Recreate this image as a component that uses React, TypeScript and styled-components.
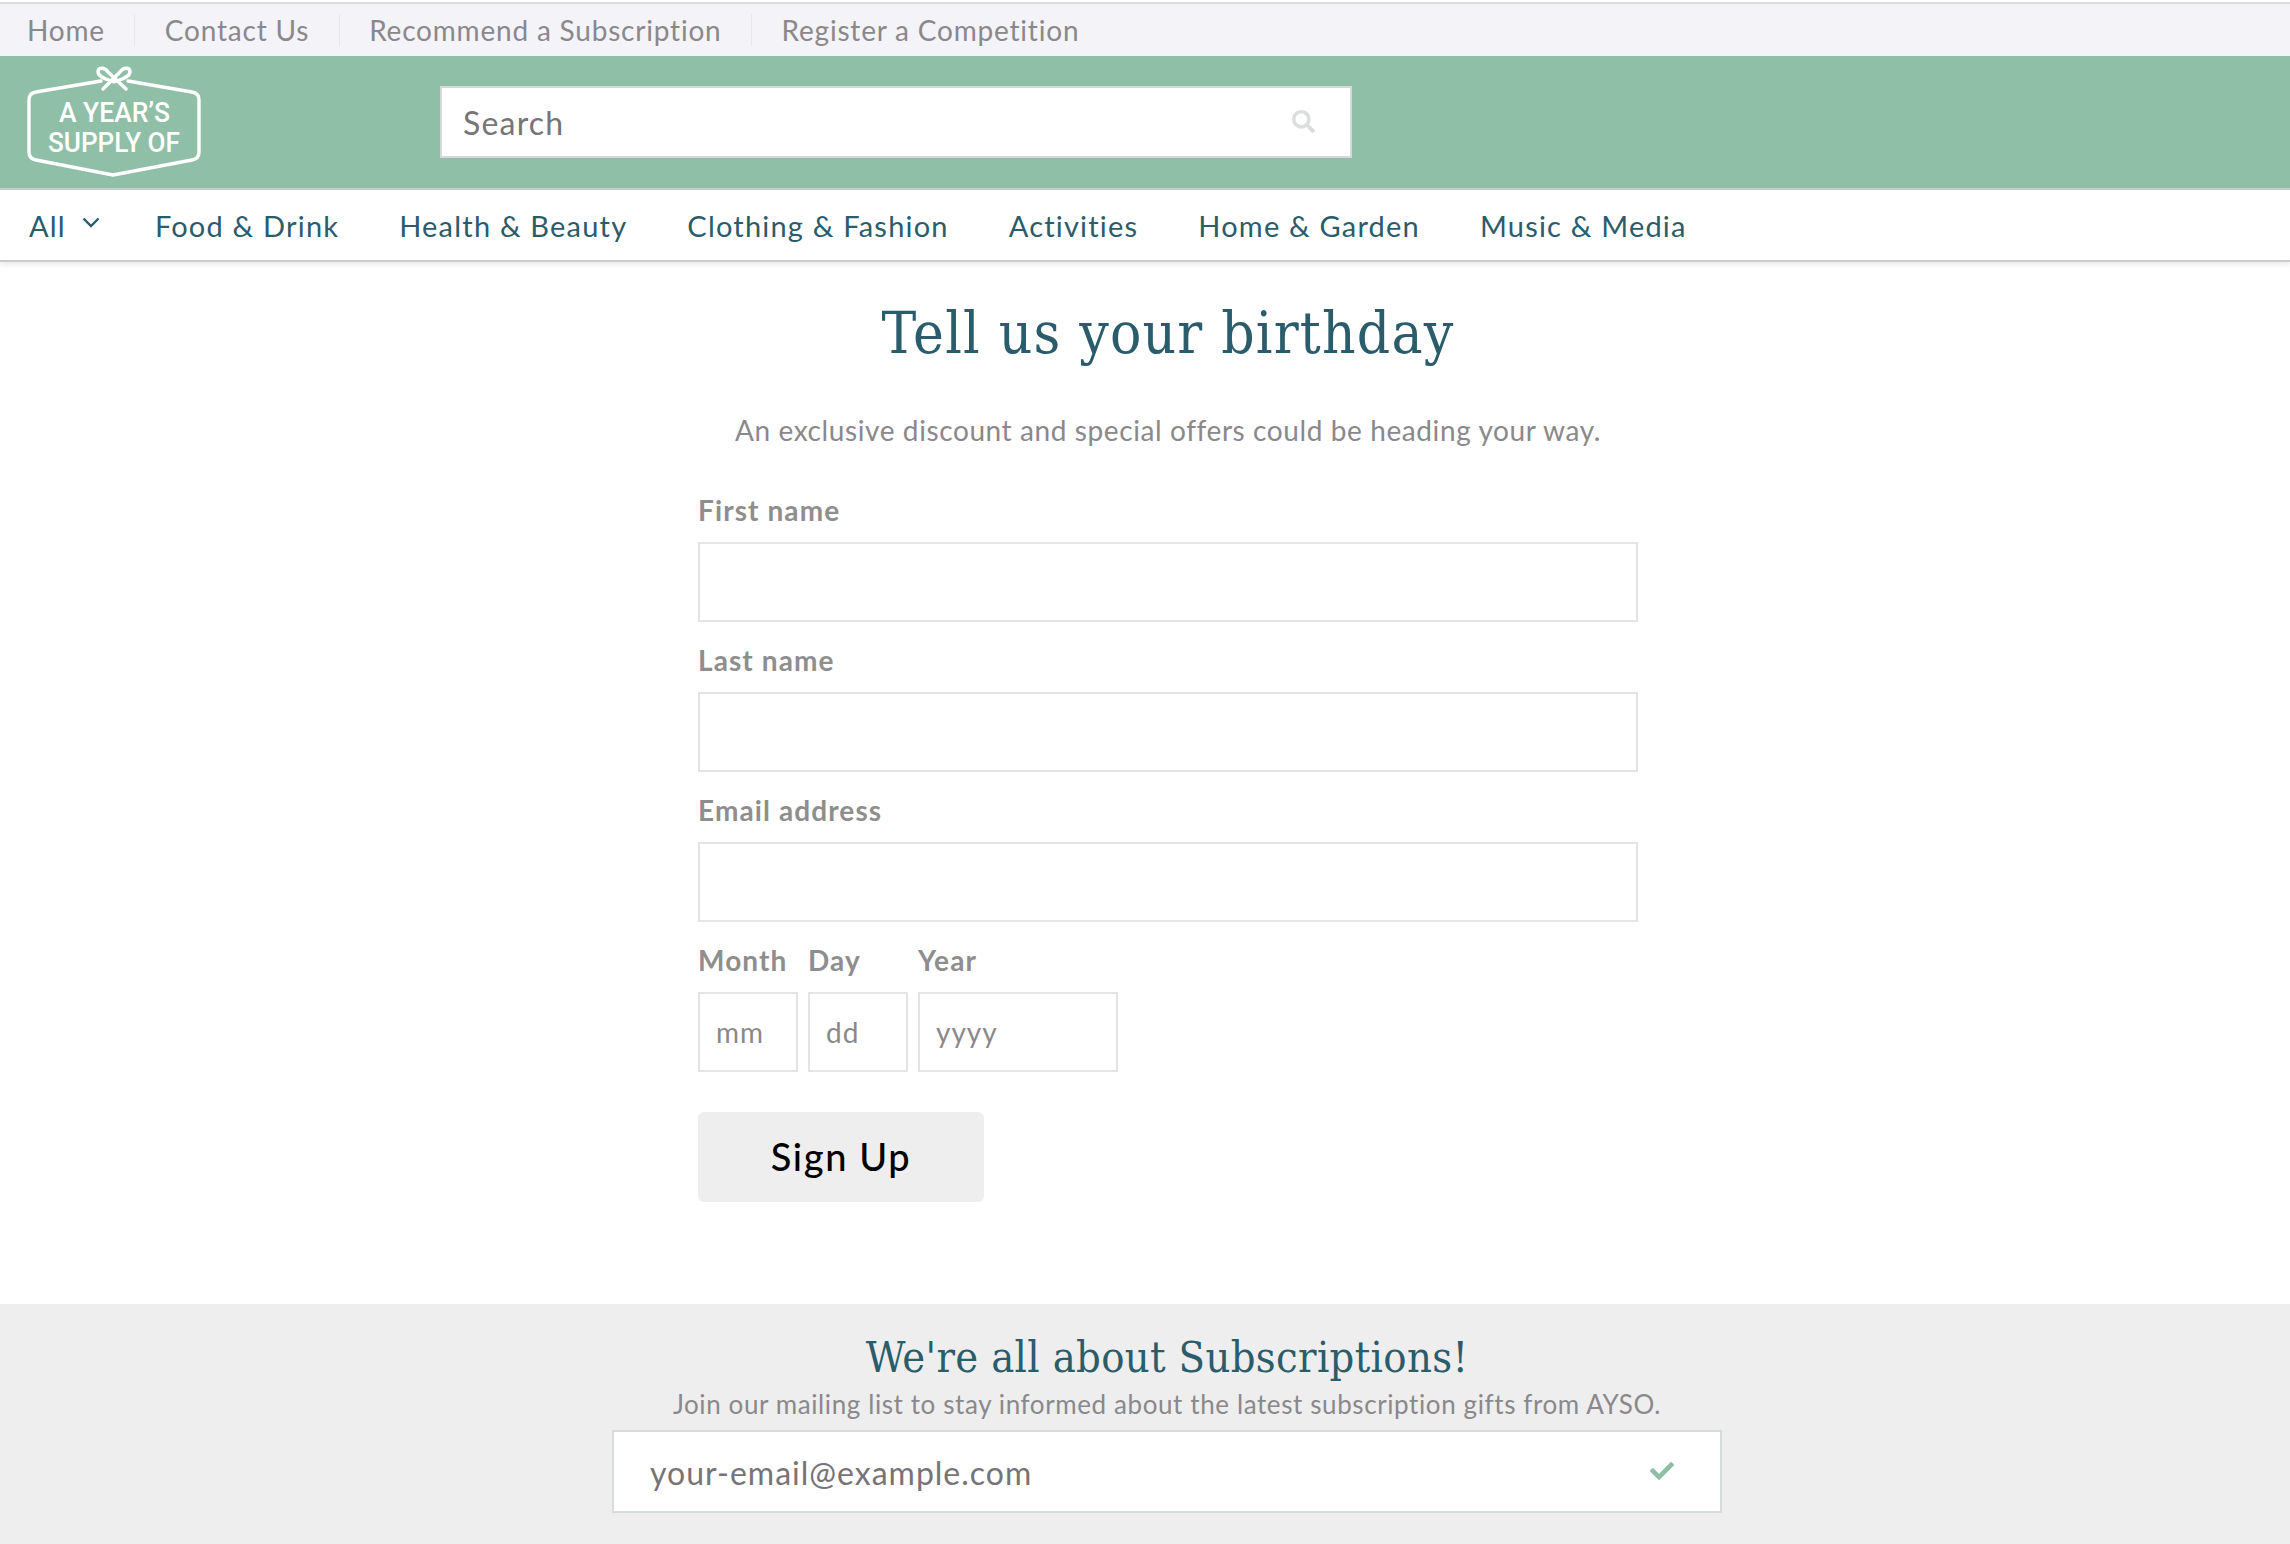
import React from 'react';
import styled, { createGlobalStyle } from 'styled-components';
import { FaSearch, FaCheck } from 'react-icons/fa';

const Global = createGlobalStyle`
  html, body { margin: 0; padding: 0; background: #fff; }
  * { box-sizing: border-box; }
  body { font-family: Lato, "Open Sans", sans-serif; }
`;
const Page = styled.div`
  width: 2290px;
  height: 1544px;
  overflow: hidden;
  display: flex;
  flex-direction: column;
  padding-top: 2px;
`;
const TopBar = styled.nav`
  height: 54px;
  flex: none;
  display: flex;
  align-items: center;
  padding: 0 0 0 27px;
  background: #f4f3f7;
  border-top: 2px solid #dcdcdf;
`;
const TopLink = styled.a`
  display: flex;
  align-items: center;
  height: 32px;
  padding: 0 29.5px;
  font-size: 28px;
  letter-spacing: 0.8px;
  color: #8a888b;
  border-right: 1px solid #e8e7ea;
  &:first-child { padding-left: 0; }
  &:last-child { border-right: 0; }
`;
const Brand = styled.header`
  height: 134px;
  flex: none;
  display: flex;
  align-items: center;
  padding-left: 26px;
  background: #90bfa8;
  border-bottom: 2px solid #cacccb;
`;
const LogoMark = styled.svg`
  width: 176px;
  height: 114px;
  flex: none;
  margin-right: 238px;
  margin-top: -2px;
`;
const SearchBox = styled.div`
  width: 912px;
  height: 72px;
  display: flex;
  align-items: center;
  padding: 0 35px 0 21px;
  background: #fff;
  border: 2px solid #d6d9d8;
`;
const SearchInput = styled.input`
  flex: 1;
  border: 0;
  outline: 0;
  background: transparent;
  padding: 0;
  font: 32px Lato, sans-serif;
  letter-spacing: 1.2px;
  &::placeholder { color: #767476; opacity: 1; }
`;
const SearchIcon = styled(FaSearch)`
  width: 23px;
  height: 23px;
  color: #dcdedd;
  margin-top: -2px;
`;
const CategoryNav = styled.nav`
  height: 72px;
  flex: none;
  display: flex;
  align-items: center;
  padding-left: 29px;
  gap: 60px;
  background: #fff;
  border-bottom: 2px solid #cccccc;
  box-shadow: 0 3px 5px rgba(0, 0, 0, 0.08);
  position: relative;
`;
const CategoryLink = styled.a`
  display: flex;
  align-items: center;
  font-size: 29px;
  letter-spacing: 1.2px;
  color: #2a5c6b;
`;
const Chevron = styled.svg`
  width: 18px;
  height: 11px;
  margin: -5px -5px 0 16px;
  fill: none;
  stroke: #2a5c6b;
  stroke-width: 2.4;
`;
const Main = styled.main`
  flex: 1;
  width: 940px;
  margin: 0 auto 0 698px;
  display: flex;
  flex-direction: column;
`;
const Title = styled.h1`
  margin: 31px 0 0;
  text-align: center;
  font: 400 58px/80px "DejaVu Serif", "Liberation Serif", serif;
  font-stretch: condensed;
  letter-spacing: 1.2px;
  color: #2a5c6b;
`;
const Lead = styled.p`
  margin: 39px 0 0;
  text-align: center;
  font-size: 28px;
  line-height: 36px;
  letter-spacing: 0.6px;
  color: #8a888b;
`;
const Field = styled.div`
  margin-top: ${(p: { $first?: boolean }) => (p.$first ? '44px' : '20px')};
  display: flex;
  flex-direction: column;
`;
const Label = styled.label`
  display: block;
  font-size: 28px;
  font-weight: 700;
  line-height: 36px;
  letter-spacing: 1.1px;
  color: #8e8e8e;
  margin-bottom: 14px;
`;
const TextInput = styled.input`
  display: block;
  width: ${(p: { $w?: number }) => (p.$w ? `${p.$w}px` : '100%')};
  height: 80px;
  padding: 0 16px;
  background: #fff;
  border: 2px solid #e4e4e4;
  outline: 0;
  font: 28px Lato, sans-serif;
  letter-spacing: 1px;
  &::placeholder { color: #8a888b; opacity: 1; }
`;
const DateRow = styled.div`
  margin-top: 20px;
  display: flex;
  gap: 10px;
`;
const DateCol = styled.div`
  display: flex;
  flex-direction: column;
`;
const SignUp = styled.button`
  width: 286px;
  height: 90px;
  margin-top: 40px;
  padding: 0 0 2px;
  border: 0;
  border-radius: 6px;
  background: #eeeeee;
  font: 500 38px Lato, sans-serif;
  letter-spacing: 1.6px;
  color: #000;
`;
const Footer = styled.footer`
  height: 240px;
  flex: none;
  display: flex;
  flex-direction: column;
  align-items: center;
  padding-left: 44px;
  background: #eeeeee;
`;
const FooterTitle = styled.h2`
  margin: 28px 0 0;
  font: 400 43px/50px "DejaVu Serif", "Liberation Serif", serif;
  font-stretch: condensed;
  letter-spacing: 0.35px;
  color: #2a5c6b;
`;
const FooterLead = styled.p`
  margin: 6px 0 0;
  font-size: 26px;
  line-height: 32px;
  letter-spacing: 0.6px;
  color: #8a888b;
`;
const Subscribe = styled.div`
  width: 1110px;
  height: 83px;
  margin-top: 10px;
  display: flex;
  align-items: center;
  padding: 0 46px 0 36px;
  background: #fff;
  border: 2px solid #d6dcdb;
`;
const SubscribeInput = styled.input`
  flex: 1;
  border: 0;
  outline: 0;
  background: transparent;
  padding: 2px 0 0;
  font: 32px Lato, sans-serif;
  letter-spacing: 1px;
  &::placeholder { color: #767476; opacity: 1; }
`;
const SubscribeIcon = styled(FaCheck)`
  width: 24px;
  height: 24px;
  color: #90bfa8;
  margin-top: -2px;
`;

const Logo = () => (
  <LogoMark viewBox="26 64 176 114" role="img" aria-label="A Year's Supply Of">
    <g fill="none" stroke="#fff" strokeWidth="3.4" strokeLinecap="round" strokeLinejoin="round">
      <path d="M101 81 L36 92 Q29 93 29 100 L29 152 Q29 159 36 160 L113 175 L192 160 Q199 159 199 152 L199 100 Q199 93 192 92 L128 81" />
      <path d="M103 89 L120 72 C123 67 130 67 130 72 C130 77 122 79 114 82 C106 79 98 77 98 72 C98 67 105 67 108 72 L126 89" />
    </g>
    <g fill="#fff" fontFamily="Roboto, sans-serif" fontWeight="500" fontSize="28" textAnchor="middle">
      <text x="114.5" y="122" textLength="111" lengthAdjust="spacingAndGlyphs">A YEAR’S</text>
      <text x="114" y="152" textLength="132" lengthAdjust="spacingAndGlyphs">SUPPLY OF</text>
    </g>
  </LogoMark>
);

export default function App() {
  return (
    <Page>
      <Global />
      <TopBar>
        {['Home', 'Contact Us', 'Recommend a Subscription', 'Register a Competition'].map((t) => (
          <TopLink key={t}>{t}</TopLink>
        ))}
      </TopBar>
      <Brand>
        <Logo />
        <SearchBox>
          <SearchInput placeholder="Search" />
          <SearchIcon />
        </SearchBox>
      </Brand>
      <CategoryNav>
        <CategoryLink>
          All
          <Chevron viewBox="0 0 18 11"><path d="M1.5 1.5 L9 9 L16.5 1.5" /></Chevron>
        </CategoryLink>
        {['Food & Drink', 'Health & Beauty', 'Clothing & Fashion', 'Activities', 'Home & Garden', 'Music & Media'].map((t) => (
          <CategoryLink key={t}>{t}</CategoryLink>
        ))}
      </CategoryNav>
      <Main>
        <Title>Tell us your birthday</Title>
        <Lead>An exclusive discount and special offers could be heading your way.</Lead>
        <Field $first>
          <Label>First name</Label>
          <TextInput />
        </Field>
        <Field>
          <Label>Last name</Label>
          <TextInput />
        </Field>
        <Field>
          <Label>Email address</Label>
          <TextInput />
        </Field>
        <DateRow>
          <DateCol>
            <Label>Month</Label>
            <TextInput $w={100} placeholder="mm" />
          </DateCol>
          <DateCol>
            <Label>Day</Label>
            <TextInput $w={100} placeholder="dd" />
          </DateCol>
          <DateCol>
            <Label>Year</Label>
            <TextInput $w={200} placeholder="yyyy" />
          </DateCol>
        </DateRow>
        <SignUp>Sign Up</SignUp>
      </Main>
      <Footer>
        <FooterTitle>We're all about Subscriptions!</FooterTitle>
        <FooterLead>Join our mailing list to stay informed about the latest subscription gifts from AYSO.</FooterLead>
        <Subscribe>
          <SubscribeInput placeholder="your-email@example.com" />
          <SubscribeIcon />
        </Subscribe>
      </Footer>
    </Page>
  );
}
